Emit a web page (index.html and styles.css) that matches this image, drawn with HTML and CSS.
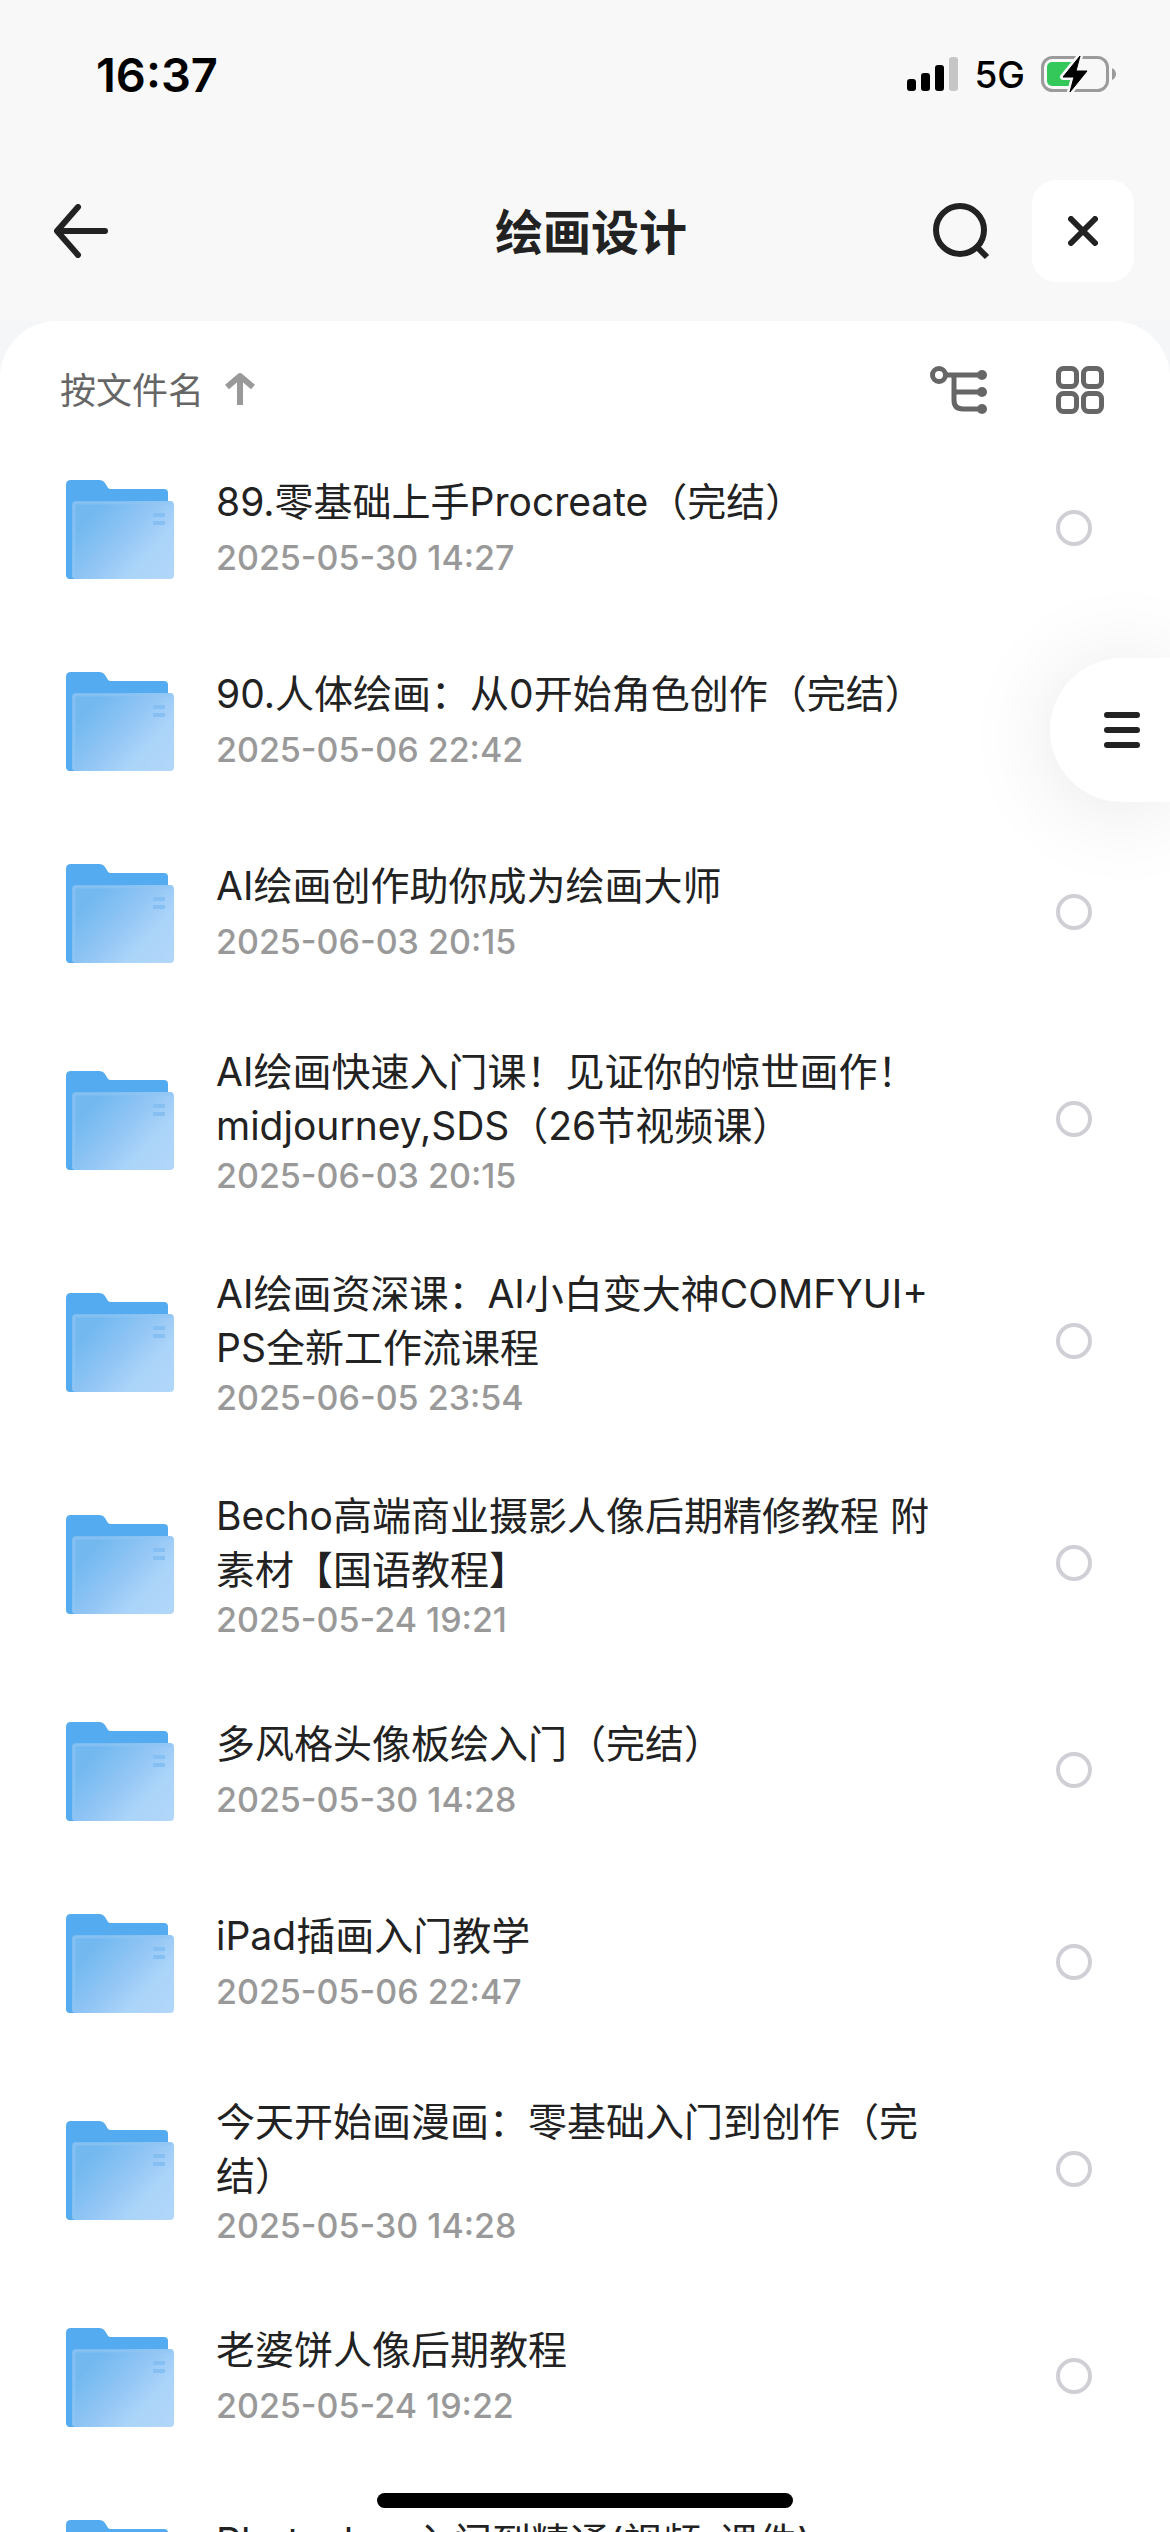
FILE: index.html
```
<!DOCTYPE html>
<html lang="zh-CN">
<head>
  <meta charset="UTF-8" />
  <meta name="viewport" content="width=device-width, initial-scale=1.0"/>
  <title>绘画设计</title>
  <link rel="stylesheet" href="styles.css">
</head>
<body>
  <!-- Shared icons -->
  <svg class="sprite" aria-hidden="true">
    <defs>
      <linearGradient id="folder-front" x1="0" y1="0.15" x2="1" y2="0.85">
        <stop offset="0.15" stop-color="#73b9f0"/>
        <stop offset="0.5" stop-color="#93c6f5"/>
        <stop offset="0.75" stop-color="#abd4f9"/>
        <stop offset="1" stop-color="#b0d6fa"/>
      </linearGradient>
    </defs>
    <symbol id="folder" viewBox="0 0 108 102">
      <path fill="#54abef" d="M5 3h28q4 0 6 3l3 5q1 1 3 1h53q4 0 4 4v30H20v56H4q-4 0-4-4V8q0-5 5-5z"/>
      <rect x="6" y="24" width="102" height="78" rx="4" fill="url(#folder-front)"/>
      <path fill="none" stroke="#8fc6f4" stroke-width="3" opacity="0.6" d="M8 101V28q0-2 2-2h96"/>
      <rect x="87" y="36" width="12" height="4" rx="1" fill="#86c0f3"/>
      <rect x="87" y="44" width="12" height="4" rx="1" fill="#86c0f3"/>
    </symbol>
  </svg>

  <header class="top">
    <div class="status-bar">
      <span class="time">16:37</span>
      <div class="status-icons">
        <svg width="51" height="36" viewBox="0 0 51 36">
          <rect x="0" y="23" width="9" height="12" rx="3"/>
          <rect x="14" y="17" width="9" height="18" rx="3"/>
          <rect x="28" y="9" width="9" height="26" rx="3"/>
          <rect x="42" y="1" width="9" height="34" rx="3" fill="#c6c6c6"/>
        </svg>
        <span class="network">5G</span>
        <svg width="75" height="38" viewBox="0 0 75 38">
          <rect x="1.5" y="2.5" width="65" height="33" rx="10" fill="none" stroke="#9b9b9b" stroke-width="3"/>
          <path fill="#9b9b9b" d="M71 13q4 2 4 6t-4 6z"/>
          <rect x="6" y="7" width="28" height="24" rx="5" fill="#34c759"/>
          <path stroke="#f8f8f8" stroke-width="6" stroke-linejoin="round" d="M39 1L22 22h11l-4 15 17-21H35z"/>
          <path stroke="#000" stroke-width="1" stroke-linejoin="round" d="M39 1L22 22h11l-4 15 17-21H35z"/>
        </svg>
      </div>
    </div>

    <div class="nav-bar">
      <button class="icon-btn back" aria-label="返回">
        <svg width="54" height="54" viewBox="0 0 54 54">
          <path class="line" d="M51 27H4M24 3L3 27l21 24"/>
        </svg>
      </button>
      <h1>绘画设计</h1>
      <div class="nav-actions">
        <button class="icon-btn" aria-label="搜索">
          <svg width="57" height="57" viewBox="0 0 57 57">
            <circle class="line" cx="27" cy="27" r="24"/>
            <path class="line square" d="M45 45l9 9"/>
          </svg>
        </button>
        <button class="icon-btn close" aria-label="关闭">
          <svg width="30" height="30" viewBox="0 0 30 30">
            <path class="line" d="M3 3l24 24M27 3L3 27"/>
          </svg>
        </button>
      </div>
    </div>
  </header>

  <main class="panel">
    <div class="toolbar">
      <button class="icon-btn sort">
        按文件名
        <svg width="30" height="33" viewBox="0 0 30 33">
          <path fill="none" stroke="#999" stroke-width="6" stroke-linejoin="round" d="M15 33V4M2 15L15 4l13 11"/>
        </svg>
      </button>
      <div class="view-actions">
        <button class="icon-btn" aria-label="目录树">
          <svg width="57" height="48" viewBox="0 0 57 48">
            <g fill="none" stroke="#666" stroke-width="5">
              <circle cx="9" cy="9" r="6.5"/>
              <path d="M16 9h36M24 9v25q0 9 9 9h19M24 26h28"/>
            </g>
            <g fill="#666">
              <circle cx="52" cy="9" r="5"/>
              <circle cx="52" cy="26" r="5"/>
              <circle cx="52" cy="43" r="5"/>
            </g>
          </svg>
        </button>
        <button class="icon-btn" aria-label="网格视图">
          <svg width="48" height="48" viewBox="0 0 48 48" fill="none" stroke="#666" stroke-width="5">
            <rect x="2.5" y="2.5" width="18" height="18" rx="5"/>
            <rect x="27.5" y="2.5" width="18" height="18" rx="5"/>
            <rect x="2.5" y="27.5" width="18" height="18" rx="5"/>
            <rect x="27.5" y="27.5" width="18" height="18" rx="5"/>
          </svg>
        </button>
      </div>
    </div>

    <ul class="files">
      <li class="file">
        <svg class="folder"><use href="#folder"/></svg>
        <label class="info" for="f1"><span class="name">89.零基础上手Procreate（完结）</span><time>2025-05-30 14:27</time></label>
        <input type="checkbox" id="f1">
      </li>
      <li class="file">
        <svg class="folder"><use href="#folder"/></svg>
        <label class="info" for="f2"><span class="name">90.人体绘画：从0开始角色创作（完结）</span><time>2025-05-06 22:42</time></label>
        <input type="checkbox" id="f2">
      </li>
      <li class="file">
        <svg class="folder"><use href="#folder"/></svg>
        <label class="info" for="f3"><span class="name">AI绘画创作助你成为绘画大师</span><time>2025-06-03 20:15</time></label>
        <input type="checkbox" id="f3">
      </li>
      <li class="file two-line">
        <svg class="folder"><use href="#folder"/></svg>
        <label class="info" for="f4"><span class="name">AI绘画快速入门课！见证你的惊世画作！midjourney,SDS（26节视频课）</span><time>2025-06-03 20:15</time></label>
        <input type="checkbox" id="f4">
      </li>
      <li class="file two-line">
        <svg class="folder"><use href="#folder"/></svg>
        <label class="info" for="f5"><span class="name">AI绘画资深课：AI小白变大神COMFYUI+<wbr>PS全新工作流课程</span><time>2025-06-05 23:54</time></label>
        <input type="checkbox" id="f5">
      </li>
      <li class="file two-line">
        <svg class="folder"><use href="#folder"/></svg>
        <label class="info" for="f6"><span class="name">Becho高端商业摄影人像后期精修教程 附素材【国语教程】</span><time>2025-05-24 19:21</time></label>
        <input type="checkbox" id="f6">
      </li>
      <li class="file">
        <svg class="folder"><use href="#folder"/></svg>
        <label class="info" for="f7"><span class="name">多风格头像板绘入门（完结）</span><time>2025-05-30 14:28</time></label>
        <input type="checkbox" id="f7">
      </li>
      <li class="file">
        <svg class="folder"><use href="#folder"/></svg>
        <label class="info" for="f8"><span class="name">iPad插画入门教学</span><time>2025-05-06 22:47</time></label>
        <input type="checkbox" id="f8">
      </li>
      <li class="file two-line">
        <svg class="folder"><use href="#folder"/></svg>
        <label class="info" for="f9"><span class="name">今天开始画漫画：零基础入门到创作（完结）</span><time>2025-05-30 14:28</time></label>
        <input type="checkbox" id="f9">
      </li>
      <li class="file">
        <svg class="folder"><use href="#folder"/></svg>
        <label class="info" for="f10"><span class="name">老婆饼人像后期教程</span><time>2025-05-24 19:22</time></label>
        <input type="checkbox" id="f10">
      </li>
      <li class="file">
        <svg class="folder"><use href="#folder"/></svg>
        <label class="info" for="f11"><span class="name">Photoshop入门到精通(视频-课件)</span><time></time></label>
        <input type="checkbox" id="f11">
      </li>
    </ul>
  </main>

  <button class="icon-btn side-menu" aria-label="菜单">
    <svg width="36" height="36" viewBox="0 0 36 36">
      <path class="line" d="M3 3h30M3 18h30M3 33h30"/>
    </svg>
  </button>
  <div class="home-indicator"></div>
</body>
</html>
```
FILE: styles.css
```
* { box-sizing: border-box; }
html, body { height: 100%; }
body {
  display: flex;
  flex-direction: column;
  margin: 0;
  overflow: hidden;
  background: #f5f6f8;
  color: #222;
  font-family: Inter, "Noto Sans CJK SC", sans-serif;
}
svg { display: block; flex: none; }
.sprite { position: absolute; width: 0; height: 0; }
.line { fill: none; stroke: #222; stroke-width: 6; stroke-linecap: round; stroke-linejoin: round; }
.line.square { stroke-linecap: butt; }
.icon-btn { padding: 0; border: none; background: none; color: inherit; font: inherit; cursor: pointer; }

/* Header */
.top { flex: none; background: #f8f8f8; }
.status-bar { display: flex; align-items: center; justify-content: space-between; height: 148px; padding: 0 54px 0 96px; color: #000; }
.time { font-size: 47px; font-weight: 600; }
.status-icons { display: flex; align-items: center; gap: 16px; }
.network { font-size: 37px; font-weight: 500; }
.nav-bar { display: grid; grid-template-columns: 1fr auto 1fr; align-items: center; height: 173px; padding: 0 36px 7px 54px; }
.nav-bar h1 { margin: 0; padding: 4px 6px 0 0; font-size: 48px; font-weight: 600; line-height: 72px; }
.nav-actions { display: flex; align-items: center; justify-content: flex-end; gap: 42px; }
.back { justify-self: start; }
.close { display: flex; align-items: center; justify-content: center; width: 102px; height: 102px; border-radius: 24px; background: #fff; }

/* File list */
.panel { flex: 1; min-height: 0; overflow: hidden; border-radius: 57px 57px 0 0; background: #fff; }
.toolbar { display: flex; align-items: center; justify-content: space-between; height: 111px; padding: 27px 66px 0 60px; }
.sort { display: flex; align-items: center; gap: 21px; padding-bottom: 4px; color: #666; font-size: 36px; }
.view-actions { display: flex; gap: 69px; }
.files { margin: 0; padding: 0; list-style: none; }
.file { display: flex; align-items: center; height: 192px; padding: 0 78px 0 66px; }
.two-line { height: 222px; }
.folder { width: 108px; height: 102px; }
.info { flex: 1; min-width: 0; margin: 0 114px 0 42px; }
.name { display: block; padding-bottom: 6px; font-size: 39px; line-height: 54px; }
.two-line .name { padding: 6px 0 0; }
time { display: block; min-height: 46px; color: #999; font-size: 34px; font-weight: 500; line-height: 46px; }
input { flex: none; appearance: none; width: 36px; height: 36px; margin: 0; border: 4px solid #d0cfd6; border-radius: 50%; }

/* Floating controls */
.side-menu {
  position: fixed;
  top: 658px;
  right: 0;
  width: 120px;
  height: 144px;
  padding-left: 54px;
  border-radius: 72px 0 0 72px;
  background: #fff;
  box-shadow: 0 6px 90px rgba(0, 0, 0, 0.1);
}
.home-indicator { position: fixed; bottom: 24px; left: 50%; width: 416px; height: 15px; border-radius: 8px; background: #000; transform: translateX(-50%); }
```
